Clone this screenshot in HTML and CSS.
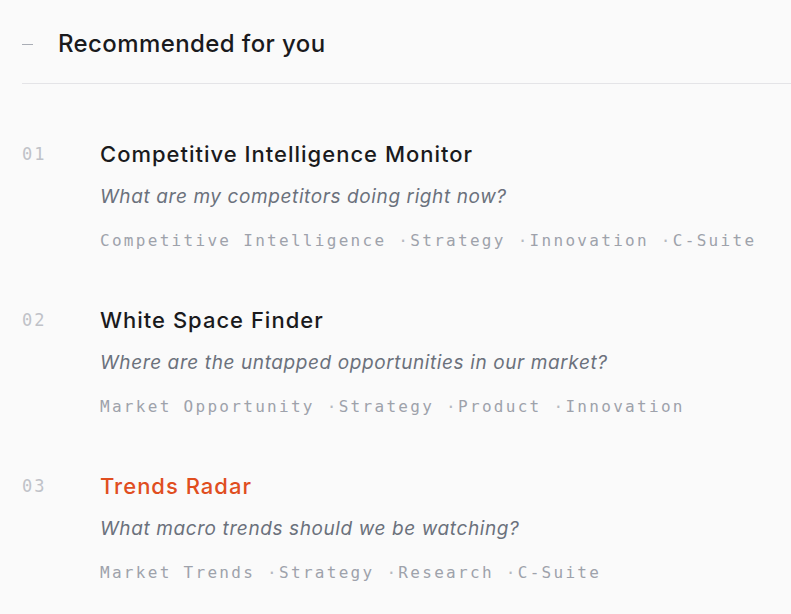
FILE: index.html
```html
<!DOCTYPE html>
<html lang="en">
<head>
    <meta charset="UTF-8">
    <meta name="viewport" content="width=device-width, initial-scale=1.0">
    <title>Recommended for you</title>
    <link rel="stylesheet" href="styles.css">
</head>
<body>
    <section class="recs">
        <div class="recs-head">
            <span class="dash"></span>
            <h2>Recommended for you</h2>
        </div>

        <ol class="rec-list">
            <li class="rec">
                <span class="rec-num">01</span>
                <div class="rec-body">
                    <h3 class="rec-title">Competitive Intelligence Monitor</h3>
                    <p class="rec-question">What are my competitors doing right now?</p>
                    <div class="rec-tags">
                        <span class="tag">Competitive Intelligence</span><span class="tag">Strategy</span><span class="tag">Innovation</span><span class="tag">C-Suite</span>
                    </div>
                </div>
            </li>
            <li class="rec">
                <span class="rec-num">02</span>
                <div class="rec-body">
                    <h3 class="rec-title">White Space Finder</h3>
                    <p class="rec-question">Where are the untapped opportunities in our market?</p>
                    <div class="rec-tags">
                        <span class="tag">Market Opportunity</span><span class="tag">Strategy</span><span class="tag">Product</span><span class="tag">Innovation</span>
                    </div>
                </div>
            </li>
            <li class="rec active">
                <span class="rec-num">03</span>
                <div class="rec-body">
                    <h3 class="rec-title">Trends Radar</h3>
                    <p class="rec-question">What macro trends should we be watching?</p>
                    <div class="rec-tags">
                        <span class="tag">Market Trends</span><span class="tag">Strategy</span><span class="tag">Research</span><span class="tag">C-Suite</span>
                    </div>
                </div>
            </li>
        </ol>
    </section>
</body>
</html>
```

FILE: styles.css
```css
body {
    margin: 0;
    background-color: #fafafa;
    font-family: Inter, "Noto Sans", sans-serif;
    color: #1a1a1d;
}
.recs {
    padding-left: 22px;
}
.recs-head {
    display: flex;
    align-items: center;
    gap: 25px;
    padding: 27px 0 22px;
    border-bottom: 1px solid #e4e4e7;
}
.dash {
    width: 11px;
    height: 1px;
    background-color: #a9adb5;
}
.recs-head h2 {
    margin: 0;
    font-size: 24px;
    line-height: 34px;
    font-weight: 500;
    letter-spacing: 0.4px;
}
.rec-list {
    list-style: none;
    margin: 55px 0 0;
    padding: 0;
}
.rec {
    display: grid;
    grid-template-columns: 78px 1fr;
    margin-bottom: 52px;
}
.rec-num {
    font-family: "DejaVu Sans Mono", monospace;
    font-size: 17px;
    line-height: 30px;
    letter-spacing: 2px;
    color: #c0c2c8;
}
.rec-title {
    margin: 0;
    font-size: 22px;
    line-height: 30px;
    font-weight: 500;
    letter-spacing: 1px;
}
.rec.active .rec-title {
    color: #e04e1f;
}
.rec-question {
    margin: 14px 0 0;
    font-size: 19px;
    line-height: 28px;
    font-style: italic;
    letter-spacing: 0.6px;
    color: #6b717c;
}
.rec-tags {
    margin-top: 18px;
    font-family: "DejaVu Sans Mono", monospace;
    font-size: 16px;
    line-height: 24px;
    letter-spacing: 2.3px;
    color: #9ea2ab;
    white-space: nowrap;
}
.tag + .tag::before {
    content: " \00B7";
    color: #b6b9c0;
}
```
